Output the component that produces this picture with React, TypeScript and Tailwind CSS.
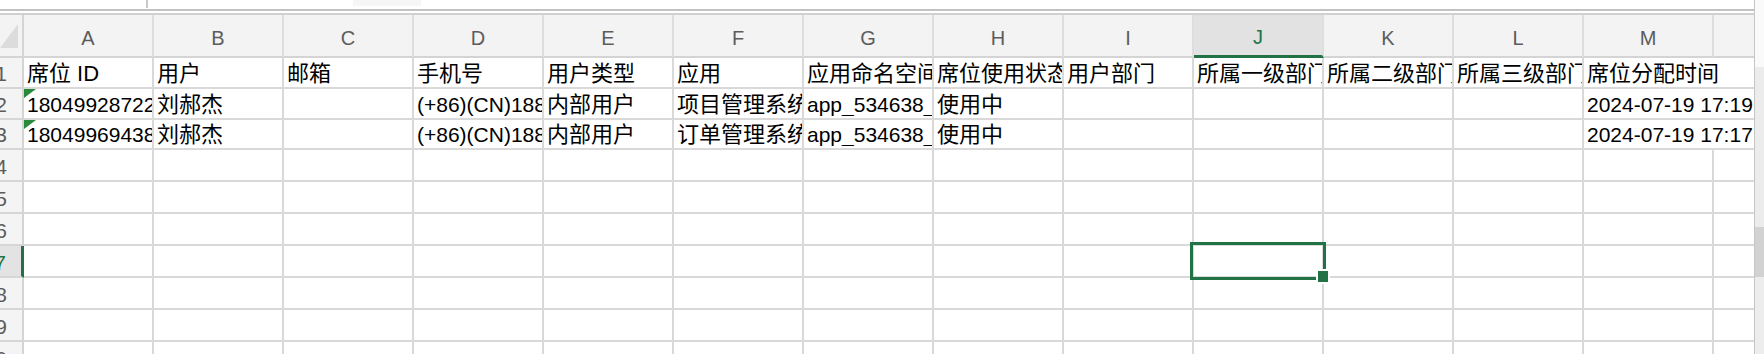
import clsx from 'clsx'

const COLS = ['A', 'B', 'C', 'D', 'E', 'F', 'G', 'H', 'I', 'J', 'K', 'L', 'M']

const FONT = 'font-["Liberation_Sans","Noto_Sans_CJK_SC",sans-serif]'

type Row = { h: string; cells: string[]; flag?: boolean }

const header = ['席位 ID', '用户', '邮箱', '手机号', '用户类型', '应用', '应用命名空间', '席位使用状态', '用户部门', '所属一级部门', '所属二级部门', '所属三级部门', '席位分配时间']

const rows: Row[] = [
  { h: 'h-[31px]', cells: header },
  {
    h: 'h-[31px]',
    flag: true,
    cells: ['1804992872218', '刘郝杰', '', '(+86)(CN)18888888888', '内部用户', '项目管理系统', 'app_534638_xmgl', '使用中', '', '', '', '', '2024-07-19 17:19'],
  },
  {
    h: 'h-[30px]',
    flag: true,
    cells: ['1804996943826', '刘郝杰', '', '(+86)(CN)18888888888', '内部用户', '订单管理系统', 'app_534638_ddgl', '使用中', '', '', '', '', '2024-07-19 17:17'],
  },
  ...Array.from({ length: 7 }, () => ({ h: 'h-[32px]', cells: Array(13).fill('') })),
]

const hasCjk = (s: string) => /[\u4e00-\u9fff]/.test(s)

function CellText({ text }: { text: string }) {
  return (
    <span
      className={clsx(
        'min-w-0 overflow-hidden whitespace-nowrap leading-[23px] text-black',
        hasCjk(text) ? 'text-[22px]' : 'text-[21px]'
      )}>
      {text}
    </span>
  )
}

function Selection() {
  // active cell border + fill handle
  return (
    <>
      <div className="pointer-events-none absolute -left-[4px] -top-[4px] z-10 h-[38px] w-[136px] border-[3px] border-[#217346]" />
      <div className="absolute left-[122px] top-[23px] z-20 h-[15px] w-[14px] border-2 border-white bg-[#217346]" />
    </>
  )
}

function FlagMark() {
  return (
    <svg className="absolute left-0 top-0" width="12" height="9" viewBox="0 0 12 9">
      <polygon points="0,0 12,0 0,9" fill="#2a8a3c" />
    </svg>
  )
}

export default function App() {
  return (
    <div className={clsx('flex h-[354px] w-[1764px] overflow-hidden bg-white', FONT)}>
      <div className="flex w-[1754px] flex-col">
        {/* formula bar remnant */}
        <div className="flex h-[11px] shrink-0 border-b-2 border-[#c2c2c2]">
          <div className="w-[146px]" />
          <div className="h-[8px] w-[2px] bg-[#c9c9c9]" />
          <div className="ml-[205px] h-[6px] w-[68px] bg-[#f6f6f6]" />
        </div>
        <div className="h-[4px] shrink-0 border-b-2 border-[#d0d0d0]" />

        {/* column header */}
        <div className="flex h-[43px] shrink-0 bg-[#f3f3f3]">
          <div className="relative w-[24px] shrink-0 border-b-2 border-r-2 border-[#d4d4d4]">
            <svg className="absolute left-0 top-[9px]" width="18" height="24" viewBox="0 0 18 24">
              <polygon points="18,0 18,24 0,24" fill="#dcdcdc" />
            </svg>
          </div>
          {COLS.map((c) => (
            <div
              key={c}
              className={clsx(
                'flex w-[130px] shrink-0 items-center justify-center border-r-2 border-r-[#dedede] pt-[4px] text-[20px] leading-none',
                c === 'J'
                  ? 'border-b-[3px] border-b-[#217346] bg-[#e2e2e2] text-[#217346]'
                  : 'border-b-2 border-b-[#d4d4d4] text-[#5c5c5c]'
              )}>
              {c}
            </div>
          ))}
          <div className="w-[40px] shrink-0 border-b-2 border-[#d4d4d4]" />
        </div>

        {rows.map((row, ri) => {
          const n = ri + 1
          const active = n === 7
          const spanLast = ri < 3
          return (
            <div key={ri} className={clsx('flex shrink-0', row.h)}>
              <div
                className={clsx(
                  'flex w-[24px] shrink-0 items-end justify-end overflow-hidden border-b-2 border-b-[#d6d6d6] pb-[2px] pr-[15px]',
                  active
                    ? 'border-r-[3px] border-r-[#217346] bg-[#e3e3e3] text-[#217346]'
                    : 'border-r-2 border-r-[#d4d4d4] bg-[#f4f4f4] text-[#5c5c5c]'
                )}>
                <span className="text-[21px] leading-[23px]">{n}</span>
              </div>
              {row.cells.map((text, ci) => {
                const isLast = ci === 12
                const selected = active && ci === 9
                return (
                  <div
                    key={ci}
                    className={clsx(
                      'relative flex shrink-0 items-end border-b-2 border-[#d9d9d9] pb-[2px] pl-[3px]',
                      isLast && spanLast ? 'w-[170px]' : 'w-[130px] border-r-2',
                      selected && 'z-10'
                    )}>
                    {row.flag && ci === 0 && <FlagMark />}
                    {text && <CellText text={text} />}
                    {selected && <Selection />}
                  </div>
                )
              })}
              {!spanLast && <div className="w-[40px] shrink-0 border-b-2 border-[#d9d9d9]" />}
            </div>
          )
        })}
      </div>

      {/* vertical scrollbar */}
      <div className="flex w-[10px] shrink-0 flex-col border-l border-[#c6c6c6]">
        <div className="h-[67px] bg-[#fafafa]" />
        <div className="h-[160px] bg-[#ececec]" />
        <div className="h-[50px] bg-[#d2d2d2]" />
        <div className="flex-1 bg-[#ededed]" />
      </div>
    </div>
  )
}
